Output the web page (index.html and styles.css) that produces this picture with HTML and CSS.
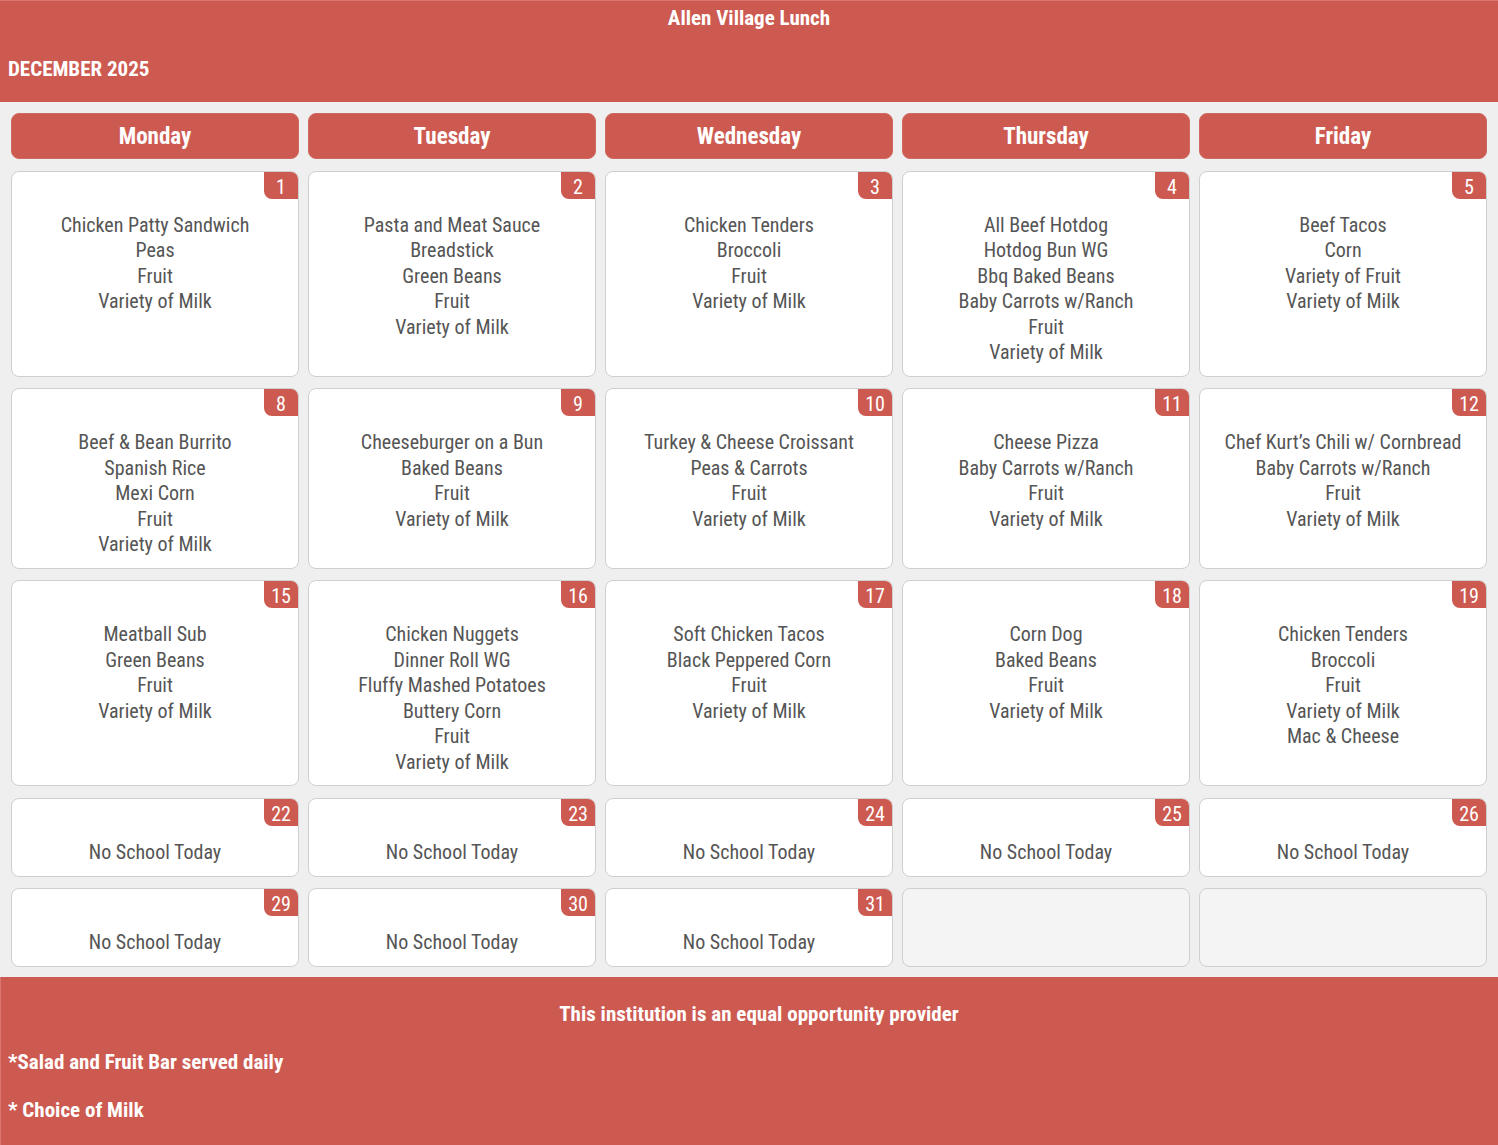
FILE: index.html
```html
<!DOCTYPE html>
<html>
<head>
<meta charset="utf-8">
<link rel="stylesheet" href="styles.css">
</head>
<body>
<header class="top">
  <div class="title">Allen Village Lunch</div>
  <div class="month">DECEMBER 2025</div>
</header>
<main class="cal">
  <div class="dow">Monday</div>
  <div class="dow">Tuesday</div>
  <div class="dow">Wednesday</div>
  <div class="dow">Thursday</div>
  <div class="dow">Friday</div>

  <div class="day"><span class="num">1</span><div class="menu">Chicken Patty Sandwich<br>Peas<br>Fruit<br>Variety of Milk</div></div>
  <div class="day"><span class="num">2</span><div class="menu">Pasta and Meat Sauce<br>Breadstick<br>Green Beans<br>Fruit<br>Variety of Milk</div></div>
  <div class="day"><span class="num">3</span><div class="menu">Chicken Tenders<br>Broccoli<br>Fruit<br>Variety of Milk</div></div>
  <div class="day"><span class="num">4</span><div class="menu">All Beef Hotdog<br>Hotdog Bun WG<br>Bbq Baked Beans<br>Baby Carrots w/Ranch<br>Fruit<br>Variety of Milk</div></div>
  <div class="day"><span class="num">5</span><div class="menu">Beef Tacos<br>Corn<br>Variety of Fruit<br>Variety of Milk</div></div>

  <div class="day"><span class="num">8</span><div class="menu">Beef &amp; Bean Burrito<br>Spanish Rice<br>Mexi Corn<br>Fruit<br>Variety of Milk</div></div>
  <div class="day"><span class="num">9</span><div class="menu">Cheeseburger on a Bun<br>Baked Beans<br>Fruit<br>Variety of Milk</div></div>
  <div class="day"><span class="num">10</span><div class="menu">Turkey &amp; Cheese Croissant<br>Peas &amp; Carrots<br>Fruit<br>Variety of Milk</div></div>
  <div class="day"><span class="num">11</span><div class="menu">Cheese Pizza<br>Baby Carrots w/Ranch<br>Fruit<br>Variety of Milk</div></div>
  <div class="day"><span class="num">12</span><div class="menu">Chef Kurt’s Chili w/ Cornbread<br>Baby Carrots w/Ranch<br>Fruit<br>Variety of Milk</div></div>

  <div class="day"><span class="num">15</span><div class="menu">Meatball Sub<br>Green Beans<br>Fruit<br>Variety of Milk</div></div>
  <div class="day"><span class="num">16</span><div class="menu">Chicken Nuggets<br>Dinner Roll WG<br>Fluffy Mashed Potatoes<br>Buttery Corn<br>Fruit<br>Variety of Milk</div></div>
  <div class="day"><span class="num">17</span><div class="menu">Soft Chicken Tacos<br>Black Peppered Corn<br>Fruit<br>Variety of Milk</div></div>
  <div class="day"><span class="num">18</span><div class="menu">Corn Dog<br>Baked Beans<br>Fruit<br>Variety of Milk</div></div>
  <div class="day"><span class="num">19</span><div class="menu">Chicken Tenders<br>Broccoli<br>Fruit<br>Variety of Milk<br>Mac &amp; Cheese</div></div>

  <div class="day"><span class="num">22</span><div class="menu">No School Today</div></div>
  <div class="day"><span class="num">23</span><div class="menu">No School Today</div></div>
  <div class="day"><span class="num">24</span><div class="menu">No School Today</div></div>
  <div class="day"><span class="num">25</span><div class="menu">No School Today</div></div>
  <div class="day"><span class="num">26</span><div class="menu">No School Today</div></div>

  <div class="day"><span class="num">29</span><div class="menu">No School Today</div></div>
  <div class="day"><span class="num">30</span><div class="menu">No School Today</div></div>
  <div class="day"><span class="num">31</span><div class="menu">No School Today</div></div>
  <div class="day empty"></div>
  <div class="day empty"></div>
</main>
<footer class="foot">
  <div class="note center">This institution is an equal opportunity provider</div>
  <div class="note">*Salad and Fruit Bar served daily</div>
  <div class="note">* Choice of Milk</div>
</footer>
</body>
</html>
```

FILE: styles.css
```css
html, body {
  margin: 0;
  padding: 0;
}
body {
  background: #efefef;
  font-family: "Roboto Condensed", "Liberation Sans", Arial, sans-serif;
  width: 1498px;
}
.top {
  background: #cd5a50;
  color: #fff;
  height: 102px;
  box-sizing: border-box;
  border-top: 1px solid #d8776f;
  font-weight: bold;
  font-size: 21px;
}
.title {
  text-align: center;
  line-height: 35px;
  height: 35px;
}
.month {
  margin-top: 15px;
  line-height: 36px;
  padding-left: 8px;
}
.cal {
  display: grid;
  grid-template-columns: repeat(5, 288px);
  column-gap: 9px;
  row-gap: 11.5px;
  padding: 11px 11px 10px;
  align-items: stretch;
}
.dow {
  background: #cd5a50;
  color: #fff;
  font-weight: bold;
  font-size: 23px;
  height: 46px;
  line-height: 46px;
  text-align: center;
  border-radius: 8px;
  border: 1px solid #d06a61;
  box-sizing: border-box;
  margin-bottom: 0.5px;
}
.day {
  background: #fff;
  border: 1px solid #cfcfcf;
  border-radius: 8px;
  display: flex;
  flex-direction: column;
  overflow: hidden;
}
.day.empty {
  background: #f4f4f4;
  min-height: 77px;
}
.num {
  align-self: flex-end;
  background: #cd5a50;
  color: #fff;
  font-size: 20px;
  min-width: 34px;
  height: 27px;
  line-height: 30px;
  text-align: center;
  box-sizing: border-box;
  padding: 0 5px;
  border-radius: 0 0 0 8px;
}
.menu {
  text-align: center;
  color: #555;
  font-size: 20px;
  line-height: 25.4px;
  padding: 14px 6px 10.5px;
}
.foot {
  background: #cd5a50;
  color: #fff;
  font-weight: bold;
  font-size: 21px;
  padding: 13px 0 12px;
  border-left: 1px solid #d8776f;
}
.note {
  line-height: 48px;
  padding-left: 7px;
}
.note.center {
  text-align: center;
  padding-left: 19px;
}
```
